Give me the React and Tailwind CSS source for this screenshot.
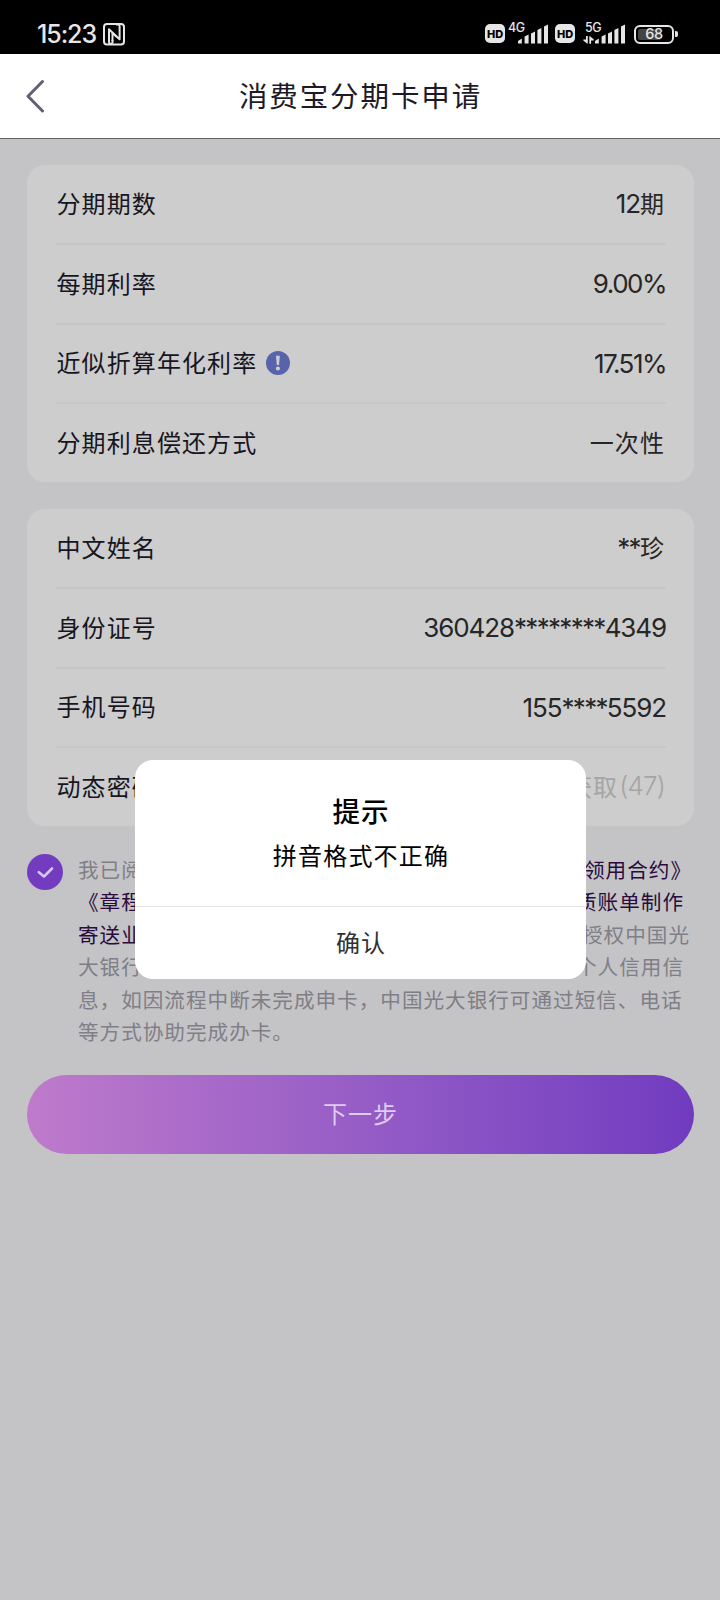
const Signal = () => (
  <svg width="30" height="20" viewBox="0 0 30 20" fill="#e6e6e6" className="block">
    <path d="M0 19.5v-2.5l3.8-2.4v4.9z" />
    <path d="M6.6 19.5v-7l4-2v9z" />
    <path d="M13 19.5v-10l4-2v12z" />
    <path d="M19.4 19.5v-13.500l4-2v15.500z" />
    <path d="M26 19.500v-17l4-2v19z" />
  </svg>
);

const HdBadge = () => (
  <span className="flex h-[19px] w-5 items-center justify-center rounded-[5px] bg-[#e6e6e6] pt-px font-[Inter,sans-serif] text-[11px] leading-[18px] font-extrabold tracking-[-0.200px] text-black">
    HD
  </span>
);

const networkLabel = "absolute top-[-4px] left-[-10px] font-[Inter,sans-serif] text-[12.500px] leading-[15px] font-medium tracking-[-0.500px]";

function StatusBar() {
  return (
    <div className="flex h-[54px] items-start justify-between bg-black pr-[42px] pl-[37px] text-[#e6e6e6]">
      <div className="flex pt-[22px]">
        <span className="w-[65px] font-[Inter,sans-serif] text-[25px] leading-[25px] font-medium tracking-[-1.100px] whitespace-nowrap">15:23</span>
        <svg width="22" height="23" viewBox="0 0 22 23" fill="none" stroke="#e6e6e6" strokeWidth="2" strokeLinejoin="round" className="mt-px ml-px block">
          <rect x="1" y="1" width="20" height="20.500" rx="3" />
          <path d="M9.500 20.800V17M9 20.800H7.500Q6 20.800 6 19V6.200L14 14" />
          <path d="M13 1.500H15Q16.600 1.500 16.600 3.200V16.300L9.500 10V18" />
        </svg>
      </div>
      <div className="flex pt-6">
        <HdBadge />
        <div className="relative ml-[13px] w-[30px]">
          <Signal />
          <span className={networkLabel}>4G</span>
        </div>
        <div className="ml-[7px]">
          <HdBadge />
        </div>
        <div className="relative ml-5 w-[30px]">
          <Signal />
          <span className={networkLabel}>5G</span>
          <svg width="11" height="8" viewBox="0 0 11 8" fill="#e6e6e6" className="absolute top-3 left-[-12px]">
            <path d="M3 0h1.800v7.500H4L0.300 4.500V3.500H3z" />
            <path d="M6.300 7.800h1.800V4.500h2.600V3.300L7 0.300H6.300z" />
          </svg>
        </div>
        <div className="ml-[9px] flex items-center">
          <div className="flex h-[19px] w-10 items-center justify-center rounded-[6px] border-2 border-[#e6e6e6] bg-[linear-gradient(90deg,#444_0_24px,#000_24px)] bg-clip-content p-[2px]">
            <span className="font-[Inter,sans-serif] text-[14.500px] leading-[14px] font-medium tracking-[-0.300px]">68</span>
          </div>
          <span className="ml-px h-[6px] w-[3px] rounded-r-[2px] bg-[#e6e6e6]" />
        </div>
      </div>
    </div>
  );
}

function Header() {
  return (
    <div className="flex h-[85px] items-center border-b border-[#636363] bg-white">
      <svg width="20" height="34" viewBox="0 0 20 34" fill="none" stroke="#625f72" strokeWidth="3" strokeLinecap="round" className="ml-[26px] block">
        <path d="M16.500 2.500L2 17.300l14.500 14.700" strokeLinejoin="round" />
      </svg>
      <h1 className="flex-1 pr-[45px] pb-[2px] text-center text-[28.500px] leading-10 tracking-[1.900px] text-[#1d1a28]">消费宝分期卡申请</h1>
    </div>
  );
}

const InfoIcon = () => (
  <svg width="24" height="24" viewBox="0 0 24 24" className="mt-px ml-[9px] block">
    <circle cx="12" cy="12" r="12" fill="#5763ab" />
    <path d="M10 4.800h3.800l-.8 9.200h-2.200z" fill="#cdcdd6" />
    <circle cx="11.900" cy="17.500" r="2" fill="#cdcdd6" />
  </svg>
);

/* Latin values: digits and mask asterisks are tracked separately. */
const LatinValue = ({ text, percent }) => (
  <span className="pt-[3px] font-[Inter,sans-serif] text-[26px] leading-8 whitespace-nowrap">
    {text.split(/(\*+)/).map((part, i) =>
      part.startsWith("*") ? (
        <span key={i} className="tracking-[-1.700px]">{part}</span>
      ) : (
        <span key={i} className={percent ? "tracking-[-1.500px]" : "tracking-[-1.100px]"}>{part}</span>
      )
    )}
  </span>
);

function Card({ rows }) {
  return (
    <div className="flex h-[317px] flex-col rounded-[18px] bg-[#cdcdcd] pr-[28px] pl-[29px]">
      {rows.map((r, i) => (
        <div key={r.label} className={`flex flex-1 items-center justify-between pb-[2px] ${i ? "border-t-2 border-[#c7c7c8]" : ""}`}>
          <span className="flex items-center pl-[0.500px] text-2xl tracking-[1.100px] text-[#17151f]">
            {r.label}
            {r.info && <InfoIcon />}
          </span>
          <span className={`flex items-center text-2xl ${r.muted ? "text-[#a5a5a5]" : "text-[#262626]"}`}>
            {r.num && <LatinValue text={r.num} percent={r.num.endsWith("%")} />}
            {r.cjk && <span className="pr-px tracking-[1.100px]">{r.cjk}</span>}
            {r.tail && <span className="pr-px font-[Inter,sans-serif] text-[26px] leading-8 font-light tracking-[-0.800px]">{r.tail}</span>}
          </span>
        </div>
      ))}
    </div>
  );
}

const planRows = [
  { label: "分期期数", num: "12", cjk: "期" },
  { label: "每期利率", num: "9.00%" },
  { label: "近似折算年化利率", num: "17.51%", info: true },
  { label: "分期利息偿还方式", cjk: "一次性" },
];

const personRows = [
  { label: "中文姓名", num: "**", cjk: "珍" },
  { label: "身份证号", num: "360428********4349" },
  { label: "手机号码", num: "155****5592" },
  { label: "动态密码", cjk: "获取", tail: "(47)", muted: true },
];

function Terms() {
  const line = "flex justify-between pr-[6px]";
  const link = "text-[#2a0b3d]";
  return (
    <div className="mt-7 flex">
      <svg width="36" height="36" viewBox="0 0 36 36" fill="none" className="block shrink-0">
        <circle cx="18" cy="18" r="18" fill="#733bc0" />
        <path d="M11.800 18.200l5.200 4.300 8-8" stroke="#d6c5ec" strokeWidth="2.600" strokeLinecap="round" strokeLinejoin="round" />
      </svg>
      <div className="-mt-px mb-px ml-[15px] w-[612px] text-[20.600px] leading-[32.400px] tracking-[1px] whitespace-nowrap text-[#807e87]">
        <div className={line}><span>我已阅读</span><span className={`${link} mr-[-8px]`}>领用合约》</span></div>
        <div className={`${line} ${link}`}><span>《章程》</span><span>质账单制作</span></div>
        <div className="flex justify-between"><span className={link}>寄送业务</span><span>授权中国光</span></div>
        <div className={line}><span>大银行</span><span>个人信用信</span></div>
        <div>息，如因流程中断未完成申卡，中国光大银行可通过短信、电话</div>
        <div>等方式协助完成办卡。</div>
      </div>
    </div>
  );
}

function Dialog() {
  return (
    <div className="absolute top-[760px] left-[135px] flex h-[219px] w-[451px] flex-col rounded-[18px] bg-white text-center">
      <div className="h-[147px] border-b border-[#e4e4e6] pt-[30px] pl-px">
        <h2 className="text-[27.500px] leading-10 font-medium tracking-[1px] text-black">提示</h2>
        <p className="mt-[7px] text-2xl leading-9 tracking-[1.200px] text-black">拼音格式不正确</p>
      </div>
      <button className="flex-1 pb-[2px] pl-px text-2xl tracking-[1px] text-[#303030]">确认</button>
    </div>
  );
}

export default function App() {
  return (
    <div className="relative h-[1600px] w-[720px] overflow-hidden bg-[#c4c4c6] font-['Noto_Sans_CJK_SC',sans-serif]">
      <StatusBar />
      <Header />
      <main className="pt-[26px] pr-[26px] pl-[27px]">
        <Card rows={planRows} />
        <div className="h-[27px]" />
        <Card rows={personRows} />
        <Terms />
        <button className="mt-[27px] flex h-[79px] w-full items-center justify-center rounded-full bg-linear-to-r from-[#bf7acb] to-[#713bc0] pb-[3px] text-2xl tracking-[1px] text-[#dfcbed]">
          下一步
        </button>
      </main>
      <Dialog />
    </div>
  );
}
